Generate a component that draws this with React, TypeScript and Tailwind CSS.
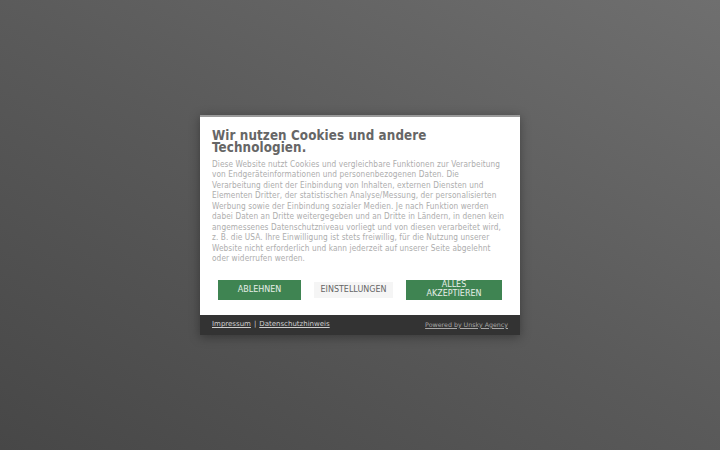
import React from "react";

export default function App() {
  const font = { fontFamily: '"DejaVu Sans", sans-serif' };
  const cond = { fontFamily: '"DejaVu Sans Condensed", "DejaVu Sans", sans-serif' };
  return (
    <div
      className="w-[720px] h-[450px] flex items-center justify-center bg-[linear-gradient(30deg,#474747_0%,#5a5a5a_50%,#6f6f6f_100%)]"
      style={font}
    >
      <div className="w-[320px] mt-[-1px] shadow-[0_2px_10px_rgba(0,0,0,0.35)]">
        <div className="bg-white border-t-2 border-[#9a9a9a] px-[12px] pt-[13px] pb-[15px]">
          <h1 className="text-[13.3px] leading-[12px] font-bold text-[#666666] tracking-[0.1px]" style={cond}>
            Wir nutzen Cookies und andere Technologien.
          </h1>
          <p className="mt-[5px] text-[8.2px] leading-[10.5px] tracking-[0.1px] text-[#adadad]" style={cond}>
            Diese Website nutzt Cookies und vergleichbare Funktionen zur Verarbeitung von Endgeräteinformationen und personenbezogenen Daten. Die Verarbeitung dient der Einbindung von Inhalten, externen Diensten und Elementen Dritter, der statistischen Analyse/Messung, der personalisierten Werbung sowie der Einbindung sozialer Medien. Je nach Funktion werden dabei Daten an Dritte weitergegeben und an Dritte in Ländern, in denen kein angemessenes Datenschutzniveau vorliegt und von diesen verarbeitet wird, z. B. die USA. Ihre Einwilligung ist stets freiwillig, für die Nutzung unserer Website nicht erforderlich und kann jederzeit auf unserer Seite abgelehnt oder widerrufen werden.
          </p>
          <div className="mt-[16px] flex items-center justify-between px-[6px]">
            <button className="w-[83px] h-[20px] bg-[#3f8452] text-[#e6efe8] text-[8px] leading-[9px] uppercase">
              Ablehnen
            </button>
            <button className="w-[79px] h-[16px] bg-[#f5f5f5] text-[#666666] text-[8px] leading-[9px] uppercase">
              Einstellungen
            </button>
            <button className="w-[96px] h-[20px] bg-[#3f8452] text-[#e6efe8] text-[8px] leading-[8.5px] uppercase flex flex-col items-center justify-center">
              <span>Alles</span>
              <span>Akzeptieren</span>
            </button>
          </div>
        </div>
        <div className="bg-[#333333] h-[20px] px-[12px] flex items-center justify-between">
          <div className="text-[7px] text-[#cfcfcf]">
            <span className="underline">Impressum</span>
            <span className="mx-[3px]">|</span>
            <span className="underline">Datenschutzhinweis</span>
          </div>
          <div className="text-[6.3px] text-[#a8a8a8] underline">Powered by Unsky Agency</div>
        </div>
      </div>
    </div>
  );
}
